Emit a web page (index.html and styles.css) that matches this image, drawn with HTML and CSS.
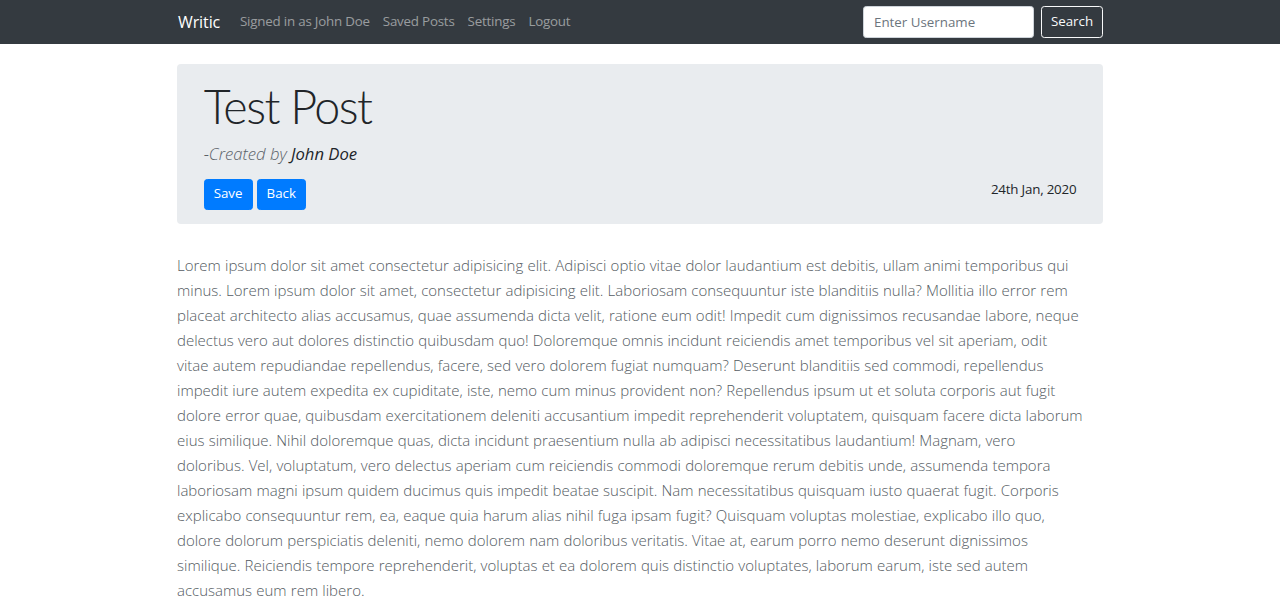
FILE: index.html
```html
<!DOCTYPE html>
<html lang="en">
<head>
<meta charset="utf-8">
<title>Writic</title>
<link rel="stylesheet" href="styles.css">
</head>
<body>
<nav class="navbar">
  <div class="container nav-inner">
    <a class="brand" href="#">Writic</a>
    <ul class="nav-links">
      <li><a href="#">Signed in as John Doe</a></li>
      <li><a href="#">Saved Posts</a></li>
      <li><a href="#">Settings</a></li>
      <li><a href="#">Logout</a></li>
    </ul>
    <form class="search">
      <input class="search-input" type="text" placeholder="Enter Username">
      <button class="btn-outline" type="button">Search</button>
    </form>
  </div>
</nav>
<main class="container">
  <section class="jumbotron">
    <h1 class="title">Test Post</h1>
    <p class="author">-Created by <span class="author-name">John Doe</span></p>
    <div class="actions-row">
      <div class="actions">
        <button class="btn-primary" type="button">Save</button>
        <button class="btn-primary" type="button">Back</button>
      </div>
      <div class="date">24th Jan, 2020</div>
    </div>
  </section>
  <p class="content">Lorem ipsum dolor sit amet consectetur adipisicing elit. Adipisci optio vitae dolor laudantium est debitis, ullam animi temporibus qui<br>
minus. Lorem ipsum dolor sit amet, consectetur adipisicing elit. Laboriosam consequuntur iste blanditiis nulla? Mollitia illo error rem<br>
placeat architecto alias accusamus, quae assumenda dicta velit, ratione eum odit! Impedit cum dignissimos recusandae labore, neque<br>
delectus vero aut dolores distinctio quibusdam quo! Doloremque omnis incidunt reiciendis amet temporibus vel sit aperiam, odit<br>
vitae autem repudiandae repellendus, facere, sed vero dolorem fugiat numquam? Deserunt blanditiis sed commodi, repellendus<br>
impedit iure autem expedita ex cupiditate, iste, nemo cum minus provident non? Repellendus ipsum ut et soluta corporis aut fugit<br>
dolore error quae, quibusdam exercitationem deleniti accusantium impedit reprehenderit voluptatem, quisquam facere dicta laborum<br>
eius similique. Nihil doloremque quas, dicta incidunt praesentium nulla ab adipisci necessitatibus laudantium! Magnam, vero<br>
doloribus. Vel, voluptatum, vero delectus aperiam cum reiciendis commodi doloremque rerum debitis unde, assumenda tempora<br>
laboriosam magni ipsum quidem ducimus quis impedit beatae suscipit. Nam necessitatibus quisquam iusto quaerat fugit. Corporis<br>
explicabo consequuntur rem, ea, eaque quia harum alias nihil fuga ipsam fugit? Quisquam voluptas molestiae, explicabo illo quo,<br>
dolore dolorum perspiciatis deleniti, nemo dolorem nam doloribus veritatis. Vitae at, earum porro nemo deserunt dignissimos<br>
similique. Reiciendis tempore reprehenderit, voluptas et ea dolorem quis distinctio voluptates, laborum earum, iste sed autem<br>
accusamus eum rem libero.</p>
</main>
</body>
</html>
```
FILE: styles.css
```css
* { box-sizing: border-box; }
html, body { margin: 0; padding: 0; }
body {
  font-family: "Open Sans", "Noto Sans", sans-serif;
  font-size: 13.33px;
  line-height: 1.5;
  color: #212529;
  background: #fff;
}
.container {
  width: 926px;
  margin: 0 auto;
}
.navbar {
  background: #343a40;
  height: 44px;
}
.nav-inner {
  display: flex;
  align-items: center;
  height: 44px;
}
.brand {
  color: #fff;
  text-decoration: none;
  font-size: 16px;
  margin-right: 13.33px;
  line-height: 1.5;
  padding-left: 1px;
  letter-spacing: -0.1px;
}
.nav-links {
  display: flex;
  list-style: none;
  margin: 0;
  padding: 0;
  flex: 1;
}
.nav-links a {
  display: block;
  padding: 6.67px 6.5px;
  color: rgba(255,255,255,.5);
  text-decoration: none;
  letter-spacing: -0.2px;
}
.search {
  display: flex;
  gap: 7px;
}
.search-input {
  width: 171px;
  height: 32px;
  border: 1px solid #ced4da;
  border-radius: 3.33px;
  padding: 5px 10px;
  font: inherit;
  color: #495057;
  background: #fff;
}
.search-input::placeholder { color: #6c757d; }
.btn-outline {
  width: 62px;
  height: 32px;
  padding: 0;
  border: 1px solid #f8f9fa;
  border-radius: 3.33px;
  background: transparent;
  color: #f8f9fa;
  font: inherit;
}
.jumbotron {
  margin-top: 20px;
  background: #e9ecef;
  border-radius: 4px;
  padding: 14px 26.67px 14.5px;
}
.title {
  margin: 0 0 6.67px;
  font-family: "Lato", "Open Sans", sans-serif;
  font-size: 46.67px;
  font-weight: 300;
  line-height: 56px;
  letter-spacing: -1.5px;
  color: #212529;
}
.author {
  margin: 0 0 13.33px;
  font-size: 16.67px;
  font-style: italic;
  font-weight: 300;
  line-height: 25px;
  color: #5a6168;
}
.author-name { font-weight: 400; color: #212529; }
.actions-row {
  display: flex;
  justify-content: space-between;
  align-items: flex-start;
}
.actions { display: flex; gap: 4px; }
.btn-primary {
  height: 31px;
  padding: 0 9px;
  border: 1px solid #007bff;
  border-radius: 3.33px;
  background: #007bff;
  color: #fff;
  font: inherit;
}
.date { line-height: 20px; color: #212529; letter-spacing: -0.2px; }
.content {
  margin: 29px 0 0;
  font-size: 15px;
  font-weight: 300;
  line-height: 25px;
  color: #545b62;
  word-spacing: 0.3px;
}
```
